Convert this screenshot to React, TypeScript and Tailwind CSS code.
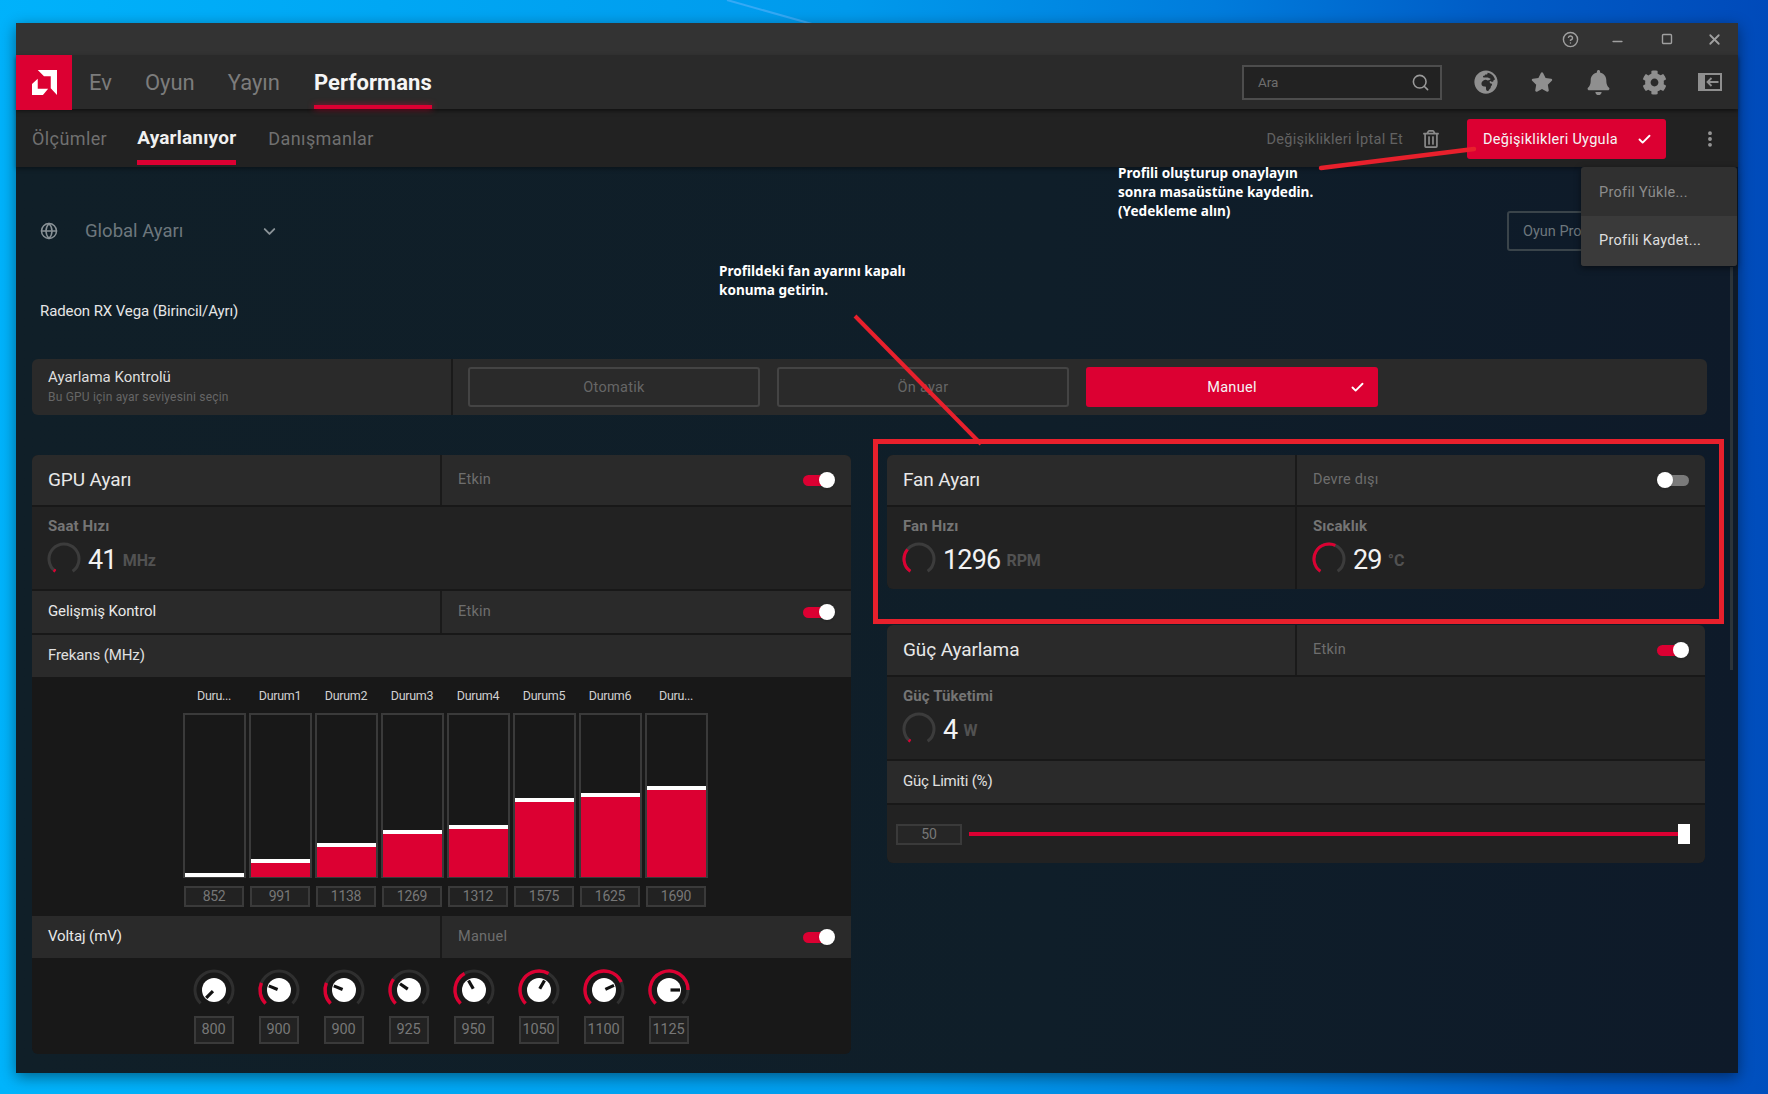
import { Check, ChevronDown, CircleHelp, EllipsisVertical, Globe, Minus, Search, Square, X } from "lucide-react";
import { FaBell, FaCog, FaGlobeAfrica, FaRegTrashAlt, FaStar } from "react-icons/fa";

const RED = "#dc0032";

const states = [
  { name: "Duru...", value: 852, fill: 4 },
  { name: "Durum1", value: 991, fill: 18 },
  { name: "Durum2", value: 1138, fill: 34 },
  { name: "Durum3", value: 1269, fill: 47 },
  { name: "Durum4", value: 1312, fill: 52 },
  { name: "Durum5", value: 1575, fill: 79 },
  { name: "Durum6", value: 1625, fill: 84 },
  { name: "Duru...", value: 1690, fill: 91 },
];

const voltages = [
  { value: 800, angle: -135 },
  { value: 900, angle: -68 },
  { value: 900, angle: -68 },
  { value: 925, angle: -55 },
  { value: 950, angle: -30 },
  { value: 1050, angle: 30 },
  { value: 1100, angle: 65 },
  { value: 1125, angle: 90 },
];

function polar(r: number, deg: number) {
  const rad = (deg * Math.PI) / 180;
  return { x: r * Math.sin(rad), y: -r * Math.cos(rad) };
}

function arc(r: number, from: number, to: number) {
  const a = polar(r, from);
  const b = polar(r, to);
  const large = to - from > 180 ? 1 : 0;
  return `M${a.x} ${a.y}A${r} ${r} 0 ${large} 1 ${b.x} ${b.y}`;
}

function Gauge({ angle }: { angle: number }) {
  return (
    <svg width="34" height="34" viewBox="-17 -17 34 34" fill="none" className="shrink-0">
      <path d={arc(15, -145, 145)} stroke="#3c3c3c" strokeWidth="3" />
      <path d={arc(15, -145, angle)} stroke={RED} strokeWidth="3" />
    </svg>
  );
}

function Knob({ angle }: { angle: number }) {
  const a = polar(1.5, angle);
  const b = polar(11, angle);
  return (
    <svg width="44" height="44" viewBox="-22 -22 44 44" fill="none">
      <path d={arc(19, -135, 135)} stroke="#2f2f2f" strokeWidth="3" />
      {angle > -135 && <path d={arc(19, -135, angle)} stroke={RED} strokeWidth="3.4" />}
      <circle r="12" fill="#fff" />
      <line x1={a.x} y1={a.y} x2={b.x} y2={b.y} stroke="#111" strokeWidth="3.2" />
    </svg>
  );
}

function Toggle({ on }: { on: boolean }) {
  return (
    <div className="relative h-4 w-8 shrink-0">
      <div className={`absolute top-[2.5px] h-[11px] rounded-full ${on ? "left-0 w-7 bg-[#dc0032]" : "right-0 w-7 bg-[#7a7a7a]"}`} />
      <div className={`absolute top-0 h-4 w-4 rounded-full bg-white shadow ${on ? "right-0" : "left-0"}`} />
    </div>
  );
}

function HeaderRow({ title, status, on, large }: { title: string; status: string; on: boolean; large?: boolean }) {
  return (
    <div className={`flex bg-[#2a2a2a] ${large ? "h-[50px]" : "h-[42px]"}`}>
      <div className={`flex w-[408px] items-center pl-4 text-[#e8e8e8] ${large ? "text-[19px] tracking-[-0.1px]" : "pb-0.5 text-[15px] tracking-[-0.1px]"}`}>
        {title}
      </div>
      <div className="w-0.5 bg-[#1a1a1a]" />
      <div className="flex flex-1 items-center justify-between pl-4 pr-4">
        <span className="text-[14.5px] tracking-[0.25px] text-[#6e6e6e]">{status}</span>
        <Toggle on={on} />
      </div>
    </div>
  );
}

function Metric({ label, value, unit, angle }: { label: string; value: string; unit: string; angle: number }) {
  return (
    <div className="flex h-[82px] flex-1 flex-col bg-[#222222] pl-[15px] pt-[11px]">
      <div className="h-4 pl-px text-[15px] font-bold leading-4 tracking-[0.1px] text-[#757575]">{label}</div>
      <div className="mt-2 flex items-center">
        <Gauge angle={angle} />
        <span className="ml-[7px] mt-0.5 text-[27px] leading-none tracking-[-0.8px] text-[#f2f2f2]">{value}</span>
        <span className="ml-1.5 mt-1 text-[16px] font-bold leading-none tracking-[-0.1px] text-[#525252]">{unit}</span>
      </div>
    </div>
  );
}

function TuneButton({ label, active }: { label: string; active?: boolean }) {
  return (
    <div
      className={`relative flex h-10 w-[292px] items-center justify-center rounded-[3px] pt-px text-[14.5px] tracking-[0.3px] ${
        active ? "bg-[#dc0032] text-[#f5f5f5]" : "border-2 border-[#444444] text-[#666666]"
      }`}
    >
      {label}
      {active && <Check size={15} strokeWidth={3} className="absolute right-[13px] top-[13px] text-white" />}
    </div>
  );
}

export default function App() {
  return (
    <div className="relative h-[1094px] w-[1768px] overflow-hidden bg-[linear-gradient(86deg,#00b4fc_0%,#009aec_50%,#007cdc_70%,#005cc6_85%,#004aba_100%)] pl-4 pt-[23px] font-['Roboto',sans-serif]">
      {/* wallpaper streak */}
      <svg width="1768" height="30" className="absolute left-0 top-0">
        <line x1="727" y1="0" x2="812" y2="24" stroke="#35a9f5" strokeWidth="2" />
      </svg>

      <div className="relative flex h-[1050px] w-[1722px] flex-col bg-[linear-gradient(90deg,#101f28_0%,#0f1e29_60%,#0e1a29_100%)] shadow-[0_4px_14px_rgba(0,0,0,0.45)]">
        {/* title bar */}
        <div className="flex h-8 items-center justify-end bg-[#333333] text-[#a0a0a0]">
          <CircleHelp size={17} strokeWidth={2} className="mr-[31px]" />
          <Minus size={15} strokeWidth={2.5} className="mr-9 mt-1" />
          <Square size={12} strokeWidth={2.8} className="mr-[33px]" />
          <X size={17} strokeWidth={2.5} className="mr-[15px]" />
        </div>

        {/* main nav */}
        <div className="z-10 flex h-[54px] items-center bg-[#2a2a2a] shadow-[0_2px_4px_rgba(0,0,0,0.5)]">
          <div className="flex h-[55px] w-14 shrink-0 items-center justify-center self-start bg-[#dc0032]">
            <svg width="25" height="25" viewBox="0 0 24 24" fill="#fff">
              <path d="M5.5 0H24V24L18 17.5V6H11.5Z" />
              <path d="M5.5 8.5V18H15.5L10.5 24H0V13.5Z" />
            </svg>
          </div>
          <div className="ml-[17px] flex h-full items-center text-[22px] text-[#7c7c7c]">
            <span>Ev</span>
            <span className="ml-[33px]">Oyun</span>
            <span className="ml-[33px]">Yayın</span>
            <span className="relative ml-[34px] flex h-full items-center font-bold tracking-[0.1px] text-[#f5f5f5]">
              Performans
              <span className="absolute bottom-0 left-0 h-1 w-full bg-[#dc0032] shadow-[0_0_6px_rgba(220,0,50,0.7)]" />
            </span>
          </div>
          <div className="ml-auto flex h-[35px] w-[200px] items-center justify-between border-2 border-[#4d4d4d] bg-[#222222] pl-[14px] pr-[10px] text-[13.5px] text-[#6e6e6e]">
            Ara
            <Search size={19} strokeWidth={2} className="text-[#9a9a9a]" />
          </div>
          <div className="ml-8 flex items-center text-[#8f8f8f]">
            <FaGlobeAfrica size={24} />
            <FaStar size={22} className="ml-[33px]" />
            <FaBell size={25} className="ml-[33px]" />
            <FaCog size={25} className="ml-[31px]" />
            <svg width="24" height="18" viewBox="0 0 24 18" className="ml-[31px] mr-[16px]">
              <rect width="24" height="18" fill="#8f8f8f" />
              <rect x="7" y="2" width="15" height="14" fill="#262626" />
              <path d="M20.5 9H9.5M13.5 5L9.5 9L13.5 13" stroke="#8f8f8f" strokeWidth="1.8" fill="none" />
            </svg>
          </div>
        </div>

        {/* sub nav */}
        <div className="flex h-[58px] items-center bg-[#222222] shadow-[0_2px_4px_rgba(0,0,0,0.35)]">
          <div className="ml-4 flex h-full items-center text-[18px] tracking-[0.4px] text-[#707070]">
            <span>Ölçümler</span>
            <span className="relative ml-[30px] flex h-full items-center text-[19px] font-bold tracking-[0.2px] text-[#f0f0f0]">
              Ayarlanıyor
              <span className="absolute bottom-0.5 left-0 h-[5px] w-full bg-[#dc0032]" />
            </span>
            <span className="ml-8">Danışmanlar</span>
          </div>
          <div className="ml-auto mt-0.5 flex items-center">
            <span className="pt-px text-[14.5px] tracking-[0.3px] text-[#626262]">Değişiklikleri İptal Et</span>
            <FaRegTrashAlt size={18} className="ml-[19px] text-[#8a8a8a]" />
            <div className="ml-[27px] flex h-10 w-[199px] items-center justify-between rounded-[3px] bg-[#dc0032] pl-4 pr-3.5 pt-px text-[14.5px] tracking-[0.3px] text-[#f5f5f5]">
              Değişiklikleri Uygula
              <Check size={15} strokeWidth={3} className="text-white" />
            </div>
            <EllipsisVertical size={20} strokeWidth={2.6} className="ml-[34px] mr-[18px] text-[#9a9a9a]" />
          </div>
        </div>

        {/* content */}
        <div className="flex flex-1 flex-col px-4 pt-11">
          <div className="flex h-10 items-center">
            <Globe size={18} strokeWidth={2} className="ml-2 text-[#8a9297]" />
            <span className="ml-[27px] w-[175px] pt-0.5 text-[18.5px] text-[#6d777d]">Global Ayarı</span>
            <ChevronDown size={19} strokeWidth={2.4} className="text-[#8a9297]" />
            <div className="ml-auto mr-[15px] flex h-10 w-[200px] items-center rounded-[3px] border-2 border-[#3a444a] pl-3.5 pt-px text-[14.5px] text-[#6d777d]">
              Oyun Profili
            </div>
          </div>

          <div className="mt-[50px] h-5 pl-2 text-[15px] leading-5 tracking-[-0.1px] text-[#e6e6e6]">Radeon RX Vega (Birincil/Ayrı)</div>

          <div className="mt-[38px] flex h-14 w-[1675px] overflow-hidden rounded-md bg-[#2a2a2a]">
            <div className="flex w-[419px] flex-col justify-center pb-0.5 pl-4">
              <div className="text-[15px] leading-[18px] text-[#dedede]">Ayarlama Kontrolü</div>
              <div className="mt-[3px] text-[12px] leading-4 tracking-[0.2px] text-[#666666]">Bu GPU için ayar seviyesini seçin</div>
            </div>
            <div className="w-0.5 bg-[#1a1a1a]" />
            <div className="flex items-center gap-[17px] pl-[15px]">
              <TuneButton label="Otomatik" />
              <TuneButton label="Ön ayar" />
              <TuneButton label="Manuel" active />
            </div>
          </div>

          <div className="mt-10 grid grid-cols-[819px_818px] gap-x-9">
            {/* GPU column */}
            <div className="flex h-[599px] flex-col overflow-hidden rounded-md bg-[#181818]">
              <HeaderRow title="GPU Ayarı" status="Etkin" on large />
              <div className="mt-0.5 flex">
                <Metric label="Saat Hızı" value="41" unit="MHz" angle={-137} />
              </div>
              <div className="mt-0.5">
                <HeaderRow title="Gelişmiş Kontrol" status="Etkin" on />
              </div>
              <div className="mt-0.5 flex h-[42px] items-center bg-[#2a2a2a] pb-0.5 pl-4 text-[15px] tracking-[-0.1px] text-[#e0e0e0]">Frekans (MHz)</div>

              <div className="flex h-[239px] pl-[149px] pt-[11px]">
                {states.map((s, i) => (
                  <div key={i} className="flex w-[66px] flex-col items-center">
                    <div className="h-4 text-[12.5px] leading-4 tracking-[-0.3px] text-[#d0d0d0]">{s.name}</div>
                    <div className="mt-[9px] flex h-[165px] w-[63px] flex-col justify-end border-2 border-b border-[#3a3a3a] bg-[#181818]">
                      <div className="border-t-4 border-white bg-[#dc0032]" style={{ height: s.fill }} />
                    </div>
                    <div className="mt-2 flex h-[21px] w-[60px] items-center justify-center border-2 border-[#3a3a3a] bg-[#222222] text-[14px] tracking-[-0.3px] text-[#777777]">
                      {s.value}
                    </div>
                  </div>
                ))}
              </div>

              <HeaderRow title="Voltaj (mV)" status="Manuel" on />

              <div className="flex pl-[149px] pt-[10px]">
                {voltages.map((v, i) => (
                  <div key={i} className="flex w-[65px] flex-col items-center">
                    <Knob angle={v.angle} />
                    <div className="mt-1 flex h-7 w-10 items-center justify-center border-2 border-[#3a3a3a] bg-[#222222] text-[14.5px] tracking-[-0.2px] text-[#777777]">
                      {v.value}
                    </div>
                  </div>
                ))}
              </div>
            </div>

            {/* fan + power column */}
            <div className="flex flex-col">
              <div className="flex flex-col gap-0.5 overflow-hidden rounded-md bg-[#181818]">
                <HeaderRow title="Fan Ayarı" status="Devre dışı" on={false} large />
                <div className="flex gap-0.5">
                  <div className="flex w-[408px]">
                    <Metric label="Fan Hızı" value="1296" unit="RPM" angle={-50} />
                  </div>
                  <div className="flex flex-1">
                    <Metric label="Sıcaklık" value="29" unit="°C" angle={25} />
                  </div>
                </div>
              </div>

              <div className="mt-9 flex flex-col gap-0.5 overflow-hidden rounded-md bg-[#181818]">
                <HeaderRow title="Güç Ayarlama" status="Etkin" on large />
                <div className="flex">
                  <Metric label="Güç Tüketimi" value="4" unit="W" angle={-137} />
                </div>
                <div className="flex h-[42px] items-center bg-[#2a2a2a] pb-0.5 pl-4 text-[15px] tracking-[-0.2px] text-[#e0e0e0]">Güç Limiti (%)</div>
                <div className="flex h-[58px] items-center bg-[#222222] pl-[9px] pr-[15px]">
                  <div className="flex h-[21px] w-[66px] items-center justify-center border-2 border-[#3a3a3a] bg-[#262626] text-[14px] text-[#777777]">50</div>
                  <div className="ml-[7px] h-1 flex-1 bg-[#dc0032]" />
                  <div className="h-5 w-3 bg-white" />
                </div>
              </div>
            </div>
          </div>
        </div>

        {/* scrollbar */}
        <div className="absolute right-[5px] top-[244px] h-[403px] w-[3px] bg-[#2b343a]" />

        {/* profile menu */}
        <div className="absolute left-[1565px] top-[144px] flex h-[99px] w-[156px] flex-col overflow-hidden rounded-[3px] bg-[#303030] shadow-[0_2px_6px_rgba(0,0,0,0.5)]">
          <div className="flex h-[49px] items-center pl-[18px] pt-0.5 text-[14.5px] tracking-[0.3px] text-[#8c8c8c]">Profil Yükle...</div>
          <div className="flex h-[50px] items-center bg-[#3a3a3a] pl-[18px] text-[14.5px] tracking-[0.3px] text-[#dedede]">Profili Kaydet...</div>
        </div>
      </div>

      {/* annotations drawn over the screenshot */}
      <svg width="1768" height="1094" className="pointer-events-none absolute left-0 top-0">
        <line x1="1321" y1="168" x2="1474" y2="149" stroke="#e8202c" strokeWidth="4.5" strokeLinecap="round" />
        <line x1="855" y1="316" x2="981" y2="444" stroke="#e8202c" strokeWidth="4" />
      </svg>
      <div className="pointer-events-none absolute left-[873px] top-[439px] h-[185px] w-[851px] border-[5px] border-[#e8202c]" />
      <div className="absolute left-[1118px] top-[163px] font-['Noto_Sans',sans-serif] text-[13.6px] font-bold leading-[19px] text-white">
        Profili oluşturup onaylayın
        <br />
        sonra masaüstüne kaydedin.
        <br />
        (Yedekleme alın)
      </div>
      <div className="absolute left-[719px] top-[261px] font-['Noto_Sans',sans-serif] text-[13.6px] font-bold leading-[19px] text-white">
        Profildeki fan ayarını kapalı
        <br />
        konuma getirin.
      </div>
    </div>
  );
}
